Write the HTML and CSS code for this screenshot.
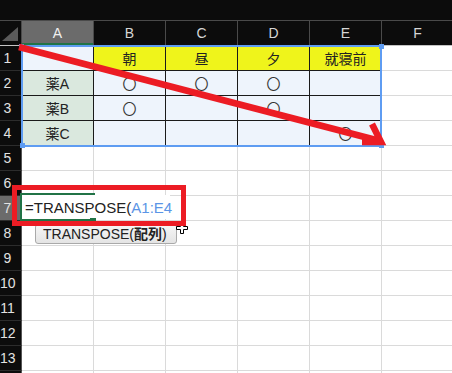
FILE: index.html
```html
<!DOCTYPE html>
<html lang="ja">
<head>
  <meta charset="UTF-8" />
  <meta name="viewport" content="width=device-width, initial-scale=1" />
  <title>TRANSPOSE</title>
  <link rel="stylesheet" href="styles.css">
</head>
<body>
  <div class="page">
    <div class="topbar"></div>

    <div class="sheet">
      <div class="corner">
        <svg width="21" height="24" viewBox="0 0 21 24"><polygon points="2,20 18,20 18,6" fill="#5a5a5a" /></svg>
      </div>
      <div class="colhead sel">A</div>
      <div class="colhead">B</div>
      <div class="colhead">C</div>
      <div class="colhead">D</div>
      <div class="colhead">E</div>
      <div class="colhead">F</div>

      <!-- 1 -->
      <div class="rowhead"><span>1</span></div>
      <div class="cell t"></div>
      <div class="cell t y">朝</div>
      <div class="cell t y">昼</div>
      <div class="cell t y">夕</div>
      <div class="cell t y">就寝前</div>
      <div class="cell"></div>

      <!-- 2 -->
      <div class="rowhead"><span>2</span></div>
      <div class="cell t g">薬A</div>
      <div class="cell t"><span class="maru">〇</span></div>
      <div class="cell t"><span class="maru">〇</span></div>
      <div class="cell t"><span class="maru">〇</span></div>
      <div class="cell t"></div>
      <div class="cell"></div>

      <!-- 3 -->
      <div class="rowhead"><span>3</span></div>
      <div class="cell t g">薬B</div>
      <div class="cell t"><span class="maru">〇</span></div>
      <div class="cell t"></div>
      <div class="cell t"><span class="maru">〇</span></div>
      <div class="cell t"></div>
      <div class="cell"></div>

      <!-- 4 -->
      <div class="rowhead"><span>4</span></div>
      <div class="cell t g">薬C</div>
      <div class="cell t"></div>
      <div class="cell t"></div>
      <div class="cell t"></div>
      <div class="cell t"><span class="maru">〇</span></div>
      <div class="cell"></div>

      <div class="rowhead"><span>5</span></div>
      <div class="cell"></div><div class="cell"></div><div class="cell"></div><div class="cell"></div><div class="cell"></div><div class="cell"></div>
      <div class="rowhead"><span>6</span></div>
      <div class="cell"></div><div class="cell"></div><div class="cell"></div><div class="cell"></div><div class="cell"></div><div class="cell"></div>
      <div class="rowhead sel"><span>7</span></div>
      <div class="cell"></div><div class="cell"></div><div class="cell"></div><div class="cell"></div><div class="cell"></div><div class="cell"></div>
      <div class="rowhead"><span>8</span></div>
      <div class="cell"></div><div class="cell"></div><div class="cell"></div><div class="cell"></div><div class="cell"></div><div class="cell"></div>
      <div class="rowhead"><span>9</span></div>
      <div class="cell"></div><div class="cell"></div><div class="cell"></div><div class="cell"></div><div class="cell"></div><div class="cell"></div>
      <div class="rowhead"><span>10</span></div>
      <div class="cell"></div><div class="cell"></div><div class="cell"></div><div class="cell"></div><div class="cell"></div><div class="cell"></div>
      <div class="rowhead"><span>11</span></div>
      <div class="cell"></div><div class="cell"></div><div class="cell"></div><div class="cell"></div><div class="cell"></div><div class="cell"></div>
      <div class="rowhead"><span>12</span></div>
      <div class="cell"></div><div class="cell"></div><div class="cell"></div><div class="cell"></div><div class="cell"></div><div class="cell"></div>
      <div class="rowhead"><span>13</span></div>
      <div class="cell"></div><div class="cell"></div><div class="cell"></div><div class="cell"></div><div class="cell"></div><div class="cell"></div>
      <!-- 14: sólo asoma el borde -->
      <div class="rowhead"></div>
      <div class="cell"></div><div class="cell"></div><div class="cell"></div><div class="cell"></div><div class="cell"></div><div class="cell"></div>
    </div>

    <!-- 参照範囲 A1:E4 -->
    <div class="range"></div>
    <div class="handle h-tl"></div>
    <div class="handle h-tr"></div>
    <div class="handle h-bl"></div>
    <div class="handle h-br"></div>

    <!-- 編集中のセル A7 -->
    <div class="active"></div>
    <div class="editor">=TRANSPOSE(<span class="ref">A1:E4</span><i class="caret"></i></div>
    <div class="fill"></div>
    <div class="tip">TRANSPOSE(<b>配列</b>)</div>

    <svg class="cursor" width="14" height="14" viewBox="0 0 14 14">
      <path d="M5.5 1.5h3v4h4v3h-4v4h-3v-4h-4v-3h4z" fill="#fff" stroke="#000" stroke-width="1" />
    </svg>

    <!-- 注釈 -->
    <div class="redbox"></div>
    <svg class="arrow" width="452" height="373" viewBox="0 0 452 373">
      <line x1="19" y1="47" x2="380" y2="141" stroke="#ec1c24" stroke-width="6.5" stroke-linecap="butt" />
      <polyline points="372,124 381,142 362,142" fill="none" stroke="#ec1c24" stroke-width="6.5" stroke-linejoin="miter" />
    </svg>
  </div>
</body>
</html>
```

FILE: styles.css
```css
:root {
  --negro: #0c0c0c;
  --gris-cab: #6b6b6b;
  --rejilla: #dadada;
  --azul-claro: #eef4fc;
  --verde-claro: #dae8de;
  --amarillo: #eff41b;
  --borde-tabla: #1a1a1a;
  --rango: #5e9cf2;
  --activo: #217346;
  --rojo: #ec1c24;
}

html,
body {
  margin: 0;
  padding: 0;
  background: #fff;
  overflow: hidden;
}

body {
  font-family: "Liberation Sans", "Noto Sans CJK JP", sans-serif;
  color: #222;
}

.page {
  position: relative;
  width: 452px;
  height: 373px;
  overflow: hidden;
}

.topbar {
  height: 20px;
  background: var(--negro);
}

.sheet {
  display: grid;
  grid-template-columns: 22px repeat(6, 72px);
  grid-template-rows: 26px;
  grid-auto-rows: 25px;
}

/* encabezados */
.corner,
.colhead {
  background: var(--negro);
  border-top: 1px solid #4a4a4a;
  border-bottom: 1px solid #c4c4c4;
  box-sizing: border-box;
}

.corner {
  border-right: 1px solid #4a4a4a;
}

.corner svg {
  display: block;
}

.colhead {
  display: flex;
  align-items: center;
  justify-content: center;
  border-right: 1px solid #4a4a4a;
  color: #d6d6d6;
  font-size: 14px;
}

.colhead.sel {
  background: var(--gris-cab);
  color: #f0f0f0;
  box-shadow: inset 0 -2px 0 var(--activo);
}

.rowhead {
  background: var(--negro);
  border-right: 1px solid #555;
  border-bottom: 1px solid #2c2c2c;
  box-sizing: border-box;
  display: flex;
  align-items: center;
  color: #e2e2e2;
  font-size: 14px;
}

.rowhead span {
  width: 15px;
  text-align: center;
}

.rowhead.sel {
  background: var(--gris-cab);
}

/* celdas */
.cell {
  border-right: 1px solid var(--rejilla);
  border-bottom: 1px solid var(--rejilla);
  box-sizing: border-box;
  display: flex;
  align-items: center;
  justify-content: center;
  font-size: 14px;
  color: #222;
}

.cell.t {
  background: var(--azul-claro);
  border-color: var(--borde-tabla);
}

.cell.g {
  background: var(--verde-claro);
}

.cell.y {
  background: var(--amarillo);
}

.maru {
  font-family: "Noto Sans CJK JP", sans-serif;
  font-size: 14px;
  color: #333;
  line-height: 1;
}

/* superposiciones */
.range {
  position: absolute;
  left: 21px;
  top: 45px;
  width: 361px;
  height: 102px;
  border: 2px solid var(--rango);
  box-sizing: border-box;
}

.handle {
  position: absolute;
  width: 5px;
  height: 5px;
  background: var(--rango);
}

.h-tl { left: 19px; top: 44px; }
.h-tr { left: 379px; top: 44px; }
.h-bl { left: 20px; top: 143px; }
.h-br { left: 379px; top: 143px; }

.active {
  position: absolute;
  left: 20px;
  top: 193px;
  width: 75px;
  height: 28px;
  border: 2px solid var(--activo);
  border-right: none;
  box-sizing: border-box;
}

.editor {
  position: absolute;
  left: 22px;
  top: 195px;
  width: 148px;
  height: 24px;
  background: #fff;
  padding-left: 3px;
  box-sizing: border-box;
  display: flex;
  align-items: center;
  font-size: 15px;
  color: #222;
  white-space: nowrap;
}

.ref {
  color: #5b95e6;
}

.caret {
  display: inline-block;
  width: 1px;
  height: 16px;
  margin-left: 1px;
  background: #888;
}

.fill {
  position: absolute;
  left: 90px;
  top: 218px;
  width: 6px;
  height: 5px;
  background: var(--activo);
}

.tip {
  position: absolute;
  left: 35px;
  top: 224px;
  width: 142px;
  height: 20px;
  box-sizing: border-box;
  padding-left: 7px;
  border: 1px solid #a9a9a9;
  border-radius: 3px;
  background: linear-gradient(#f6f6f6, #e4e4e4);
  font-size: 14px;
  line-height: 18px;
  color: #222;
  white-space: nowrap;
}

.tip b {
  font-weight: bold;
}

.cursor {
  position: absolute;
  left: 175px;
  top: 221px;
}

.redbox {
  position: absolute;
  left: 12px;
  top: 185px;
  width: 174px;
  height: 41px;
  border: 5px solid var(--rojo);
  box-sizing: border-box;
}

.arrow {
  position: absolute;
  left: 0;
  top: 0;
  pointer-events: none;
}
```
